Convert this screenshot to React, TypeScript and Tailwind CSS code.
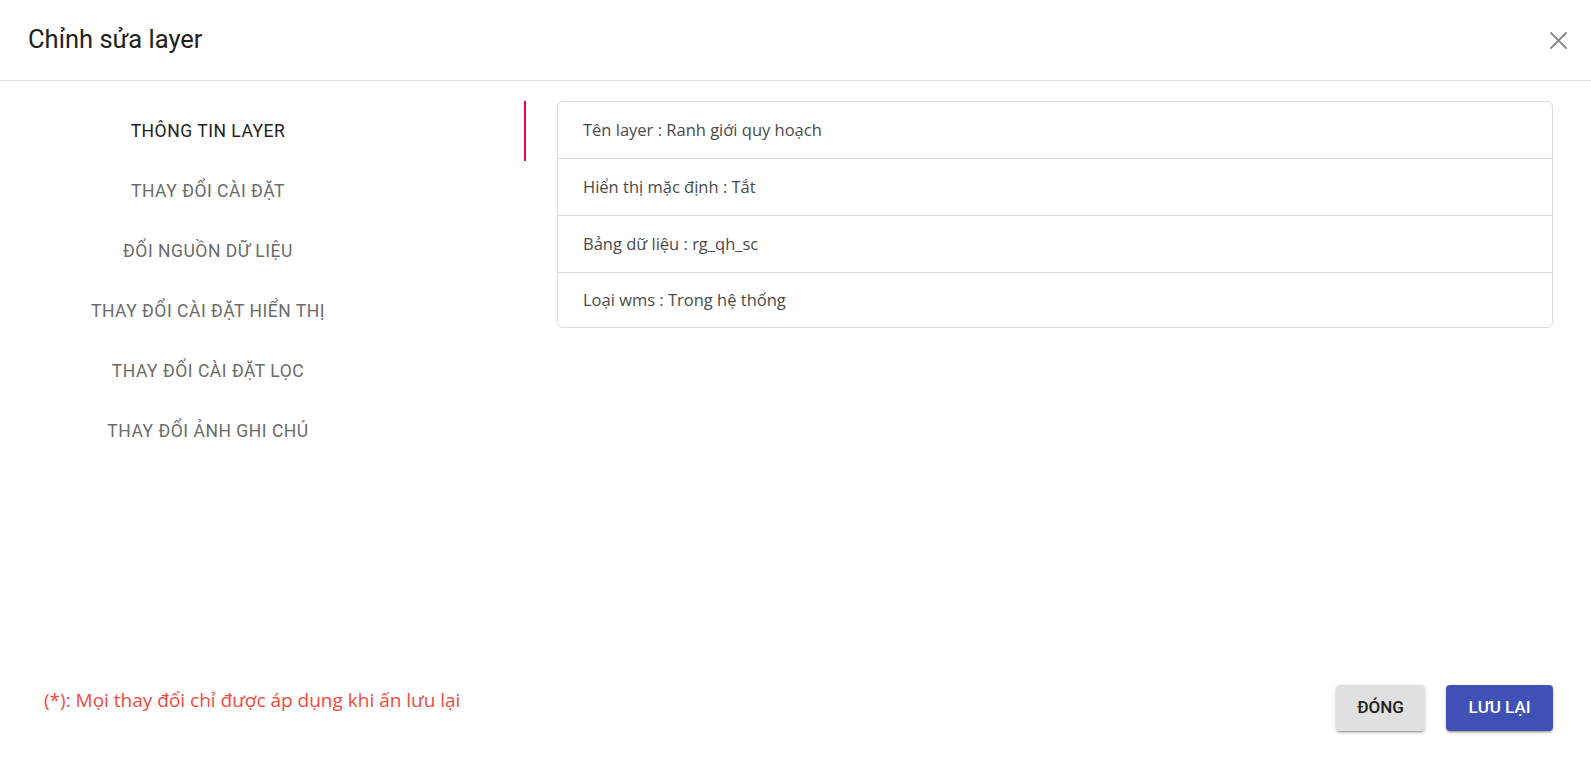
import React from "react";

const tabs = [
  "THÔNG TIN LAYER",
  "THAY ĐỔI CÀI ĐẶT",
  "ĐỔI NGUỒN DỮ LIỆU",
  "THAY ĐỔI CÀI ĐẶT HIỂN THỊ",
  "THAY ĐỔI CÀI ĐẶT LỌC",
  "THAY ĐỔI ẢNH GHI CHÚ",
];

const rows = [
  "Tên layer : Ranh giới quy hoạch",
  "Hiển thị mặc định : Tắt",
  "Bảng dữ liệu : rg_qh_sc",
  "Loại wms : Trong hệ thống",
];

export default function App() {
  return (
    <div className="w-full h-[764px] bg-white flex flex-col font-['Roboto',sans-serif]">
      <div className="h-[81px] shrink-0 border-b border-[#e0e0e0] flex items-center justify-between pl-[28px] pr-[24px]">
        <h2 className="text-[25.5px] text-[#212121] leading-none font-normal">Chỉnh sửa layer</h2>
        <button className="w-[17px] h-[17px] flex items-center justify-center">
          <svg width="17" height="17" viewBox="0 0 17 17" fill="none">
            <path d="M1 1L16 16M16 1L1 16" stroke="#8a8a8a" strokeWidth="1.8" strokeLinecap="round" />
          </svg>
        </button>
      </div>

      <div className="flex-1 flex pt-[20px]">
        <div className="relative w-[526px] shrink-0">
          <div className="w-[416px] flex flex-col">
            {tabs.map((t, i) => (
              <div
                key={t}
                className={
                  i === 0
                    ? "h-[60px] flex items-center justify-center text-[17.5px] font-normal tracking-[0.03em] text-[#222222]"
                    : "h-[60px] flex items-center justify-center text-[17.5px] font-normal tracking-[0.03em] text-[#6b6b6b]"
                }
              >
                {t}
              </div>
            ))}
          </div>
          <div className="absolute left-[524px] top-0 w-[2px] h-[60px] bg-[#f50057]" />
        </div>

        <div className="ml-[31px] mr-[38px] flex-1 self-start border border-[#dcdcdc] rounded-[6px] font-['Open_Sans',sans-serif]">
          {rows.map((r, i) => (
            <div
              key={r}
              className={
                i < rows.length - 1
                  ? "h-[57px] flex items-center px-[25px] border-b border-[#dcdcdc] text-[16.5px] text-[#4a4a4a]"
                  : "h-[54px] flex items-center px-[25px] text-[16.5px] text-[#4a4a4a]"
              }
            >
              {r}
            </div>
          ))}
        </div>
      </div>

      <div className="flex items-center justify-between pl-[44px] pr-[38px] pb-[33px]">
        <span className="pb-[16px] text-[19px] text-[#f24a3e] font-['Open_Sans',sans-serif]">
          (*): Mọi thay đổi chỉ được áp dụng khi ấn lưu lại
        </span>
        <div className="flex gap-[21px]">
          <button className="w-[89px] h-[46px] rounded-[4px] bg-[#e0e0e0] text-[17px] font-medium text-[#212121] shadow-[0_3px_1px_-2px_rgba(0,0,0,0.2),0_2px_2px_0_rgba(0,0,0,0.14),0_1px_5px_0_rgba(0,0,0,0.12)]">
            ĐÓNG
          </button>
          <button className="w-[107px] h-[46px] rounded-[4px] bg-[#3f51b5] text-[17px] font-medium text-white shadow-[0_3px_1px_-2px_rgba(0,0,0,0.2),0_2px_2px_0_rgba(0,0,0,0.14),0_1px_5px_0_rgba(0,0,0,0.12)]">
            LƯU LẠI
          </button>
        </div>
      </div>
    </div>
  );
}
